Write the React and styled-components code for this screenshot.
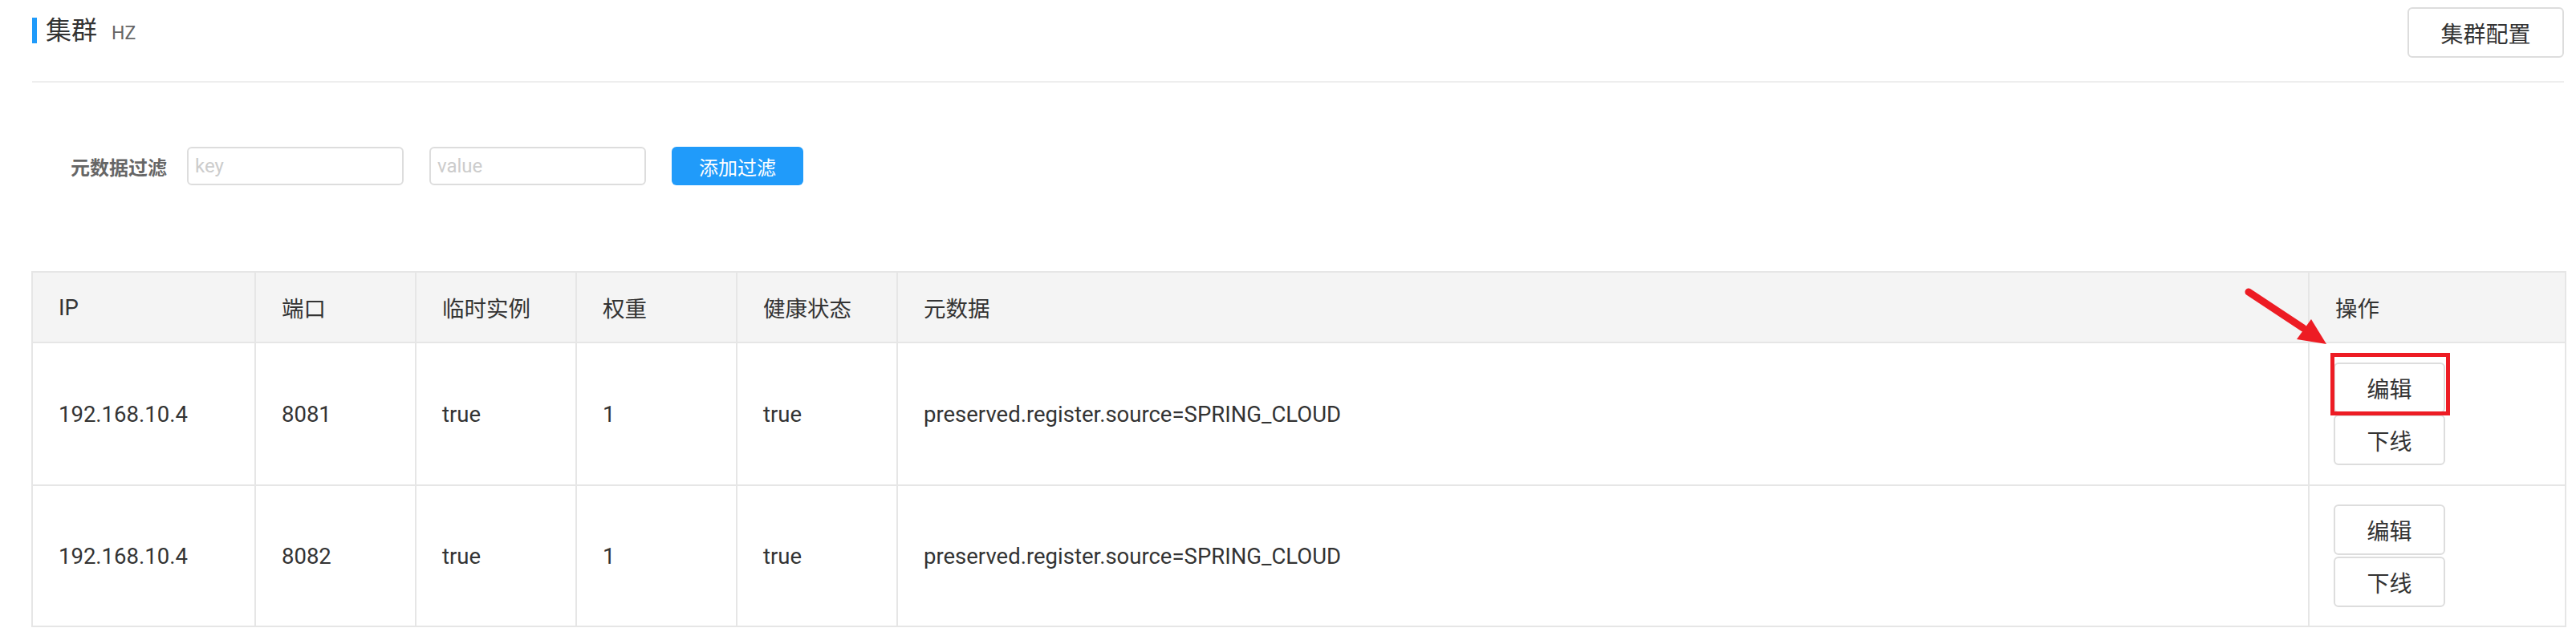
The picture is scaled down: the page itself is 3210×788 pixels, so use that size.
import React from "react";
import styled, { createGlobalStyle } from "styled-components";

const Global = createGlobalStyle`
  html, body { margin: 0; padding: 0; background: #fff; }
  body { font-family: Roboto, "Noto Sans CJK SC", sans-serif; color: #333; }
  * { box-sizing: border-box; }
`;

const Page = styled.div`
  width: 3210px;
  padding: 0 15px 0 40px;
`;

const Header = styled.div`
  height: 81px;
  display: flex;
  align-items: center;
  justify-content: space-between;
`;

const TitleWrap = styled.div`
  display: flex;
  align-items: center;
  margin-top: -5px;
`;

const Bar = styled.span`
  width: 6px;
  height: 32px;
  background: #209bfa;
  margin-right: 11px;
`;

const Title = styled.span`
  font-size: 32px;
  line-height: 32px;
  color: #333;
`;

const Sub = styled.span`
  font-size: 23px;
  color: #666;
  margin-left: 18px;
  margin-top: 6px;
`;

const GhostButton = styled.button`
  font-family: inherit;
  background: #fff;
  border: 2px solid #ddd;
  border-radius: 6px;
  color: #333;
  font-size: ${(p) => p.$fs || 28}px;
  width: ${(p) => p.$w}px;
  height: ${(p) => p.$h}px;
  padding: 0;
  display: flex;
  align-items: center;
  justify-content: center;
  cursor: pointer;
`;

const Divider = styled.div`
  margin-top: 20px;
  height: 2px;
  background: #eee;
`;

const FilterRow = styled.div`
  margin-top: 80px;
  display: flex;
  align-items: center;
  height: 48px;
  padding-left: 48px;
`;

const FilterLabel = styled.span`
  font-size: 24px;
  font-weight: 700;
  color: #666;
  margin-right: 25px;
`;

const Input = styled.input`
  width: 270px;
  height: 48px;
  border: 2px solid #ddd;
  border-radius: 6px;
  padding: 0 8px;
  font-family: inherit;
  font-size: 24px;
  color: #333;
  margin-right: 32px;
  outline: none;
  &::placeholder { color: #ccc; }
`;

const PrimaryButton = styled.button`
  width: 164px;
  height: 48px;
  border: none;
  border-radius: 6px;
  background: #209bfa;
  color: #fff;
  font-family: inherit;
  font-size: 24px;
  padding: 0;
`;

const TableWrap = styled.div`
  margin-top: 107px;
  position: relative;
`;

const Table = styled.table`
  width: 3157px;
  margin-left: -1px;
  border-collapse: collapse;
  table-layout: fixed;
  border: 2px solid #e6e6e6;
`;

const Th = styled.th`
  background: #f4f4f4;
  height: 88px;
  padding: 0 32px;
  text-align: left;
  font-weight: 400;
  font-size: 27.5px;
  color: #333;
  border: 2px solid #e6e6e6;
`;

const Td = styled.td`
  height: ${(p) => p.$h}px;
  padding: 0 ${(p) => p.$px || 32}px;
  font-size: 27.5px;
  color: #333;
  border: 2px solid #e6e6e6;
  vertical-align: middle;
`;

const Actions = styled.div`
  display: flex;
  flex-direction: column;
  gap: 2px;
  position: relative;
`;

const Highlight = styled.div`
  position: absolute;
  left: -4px;
  top: -12px;
  width: 149px;
  height: 78px;
  border: 5px solid #ed1c24;
  pointer-events: none;
`;

const ArrowSvg = styled.svg`
  position: absolute;
  left: 2750px;
  top: 15px;
  overflow: visible;
`;

const cols = [278, 200, 200, 200, 200, 1759, 320];
const heads = ["IP", "端口", "临时实例", "权重", "健康状态", "元数据", "操作"];
const rows = [
  { ip: "192.168.10.4", port: "8081", h: 178, mark: true },
  { ip: "192.168.10.4", port: "8082", h: 176, mark: false },
];

export default function App() {
  return (
    <Page>
      <Global />
      <Header>
        <TitleWrap>
          <Bar />
          <Title>集群</Title>
          <Sub>HZ</Sub>
        </TitleWrap>
        <GhostButton $w={195} $h={63}>集群配置</GhostButton>
      </Header>
      <Divider />
      <FilterRow>
        <FilterLabel>元数据过滤</FilterLabel>
        <Input placeholder="key" />
        <Input placeholder="value" />
        <PrimaryButton>添加过滤</PrimaryButton>
      </FilterRow>
      <TableWrap>
        <Table>
          <colgroup>
            {cols.map((w, i) => (
              <col key={i} style={{ width: w }} />
            ))}
          </colgroup>
          <thead>
            <tr>
              {heads.map((h) => (
                <Th key={h}>{h}</Th>
              ))}
            </tr>
          </thead>
          <tbody>
            {rows.map((r) => (
              <tr key={r.port}>
                <Td $h={r.h}>{r.ip}</Td>
                <Td $h={r.h}>{r.port}</Td>
                <Td $h={r.h}>true</Td>
                <Td $h={r.h}>1</Td>
                <Td $h={r.h}>true</Td>
                <Td $h={r.h}>preserved.register.source=SPRING_CLOUD</Td>
                <Td $h={r.h} $px={30}>
                  <Actions>
                    <GhostButton $w={139} $h={63}>编辑</GhostButton>
                    <GhostButton $w={139} $h={63}>下线</GhostButton>
                    {r.mark && <Highlight />}
                  </Actions>
                </Td>
              </tr>
            ))}
          </tbody>
        </Table>
        <ArrowSvg width="120" height="80" viewBox="0 0 120 80">
          <line x1="12" y1="11" x2="80" y2="56" stroke="#ed1c24" strokeWidth="9" strokeLinecap="round" />
          <polygon points="109,76 72,70 90,45" fill="#ed1c24" />
        </ArrowSvg>
      </TableWrap>
    </Page>
  );
}
